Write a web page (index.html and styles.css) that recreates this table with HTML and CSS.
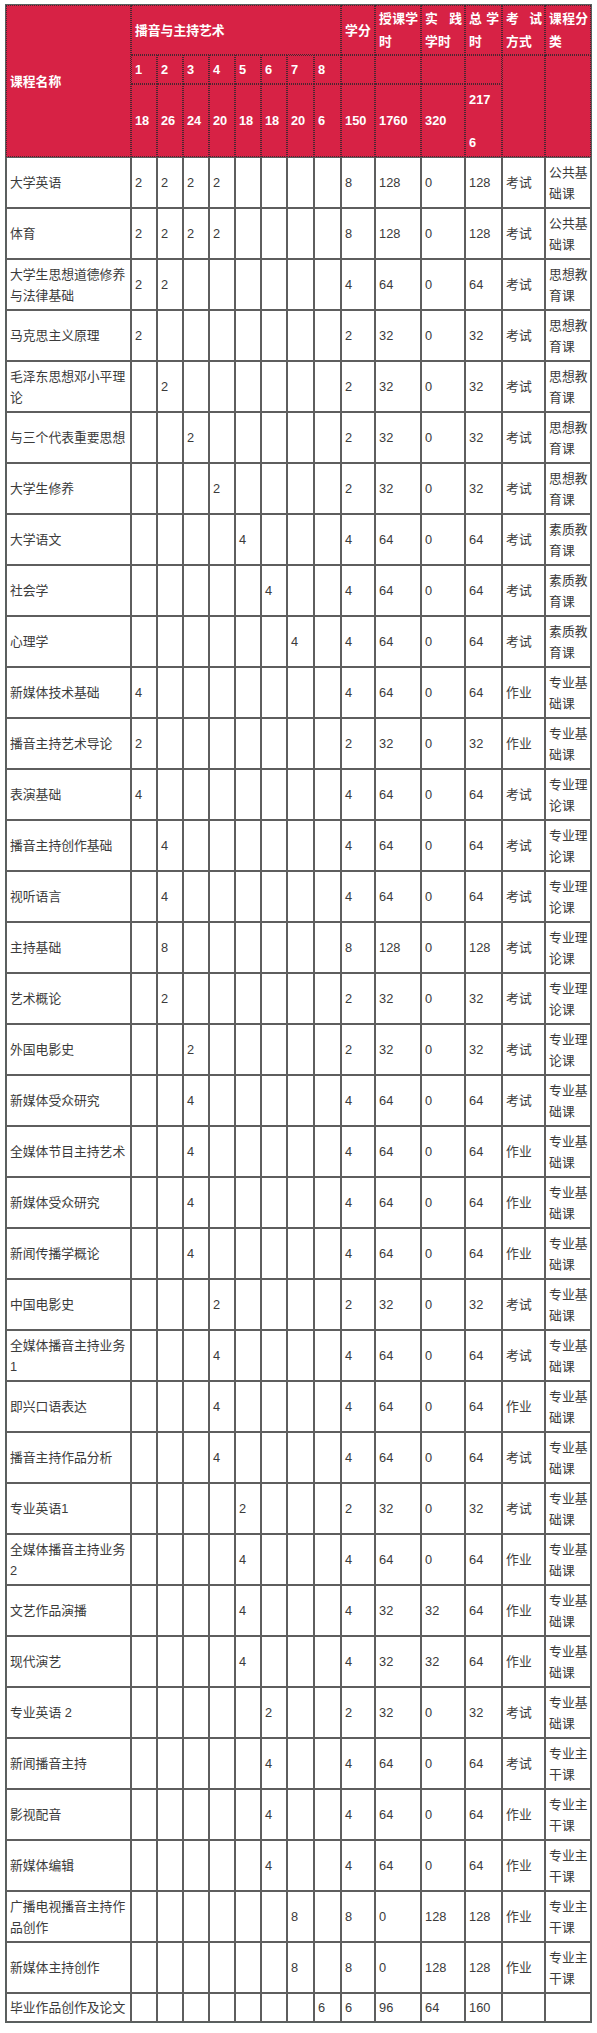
FILE: index.html
```html
<!DOCTYPE html>
<html lang="zh-CN">
<head>
<meta charset="utf-8">
<title>播音与主持艺术 课程设置</title>
<link rel="stylesheet" href="styles.css">
</head>
<body>
<table class="plan">
<colgroup>
<col class="c-name"><col class="c-sem" span="6"><col class="c-sem2" span="2"><col class="c-credit"><col class="c-teach"><col class="c-prac"><col class="c-total"><col class="c-exam"><col class="c-type">
</colgroup>
<thead>
<tr class="h1">
<th rowspan="3">课程名称</th>
<th colspan="8">播音与主持艺术</th>
<th>学分</th><th>授课学时</th><th>实践学时</th><th>总学时</th><th rowspan="1">考试方式</th><th>课程分类</th>
</tr>
<tr class="h2">
<th>1</th><th>2</th><th>3</th><th>4</th><th>5</th><th>6</th><th>7</th><th>8</th>
<th></th><th></th><th></th><th></th><th rowspan="2"></th><th rowspan="2"></th>
</tr>
<tr class="h3">
<th>18</th><th>26</th><th>24</th><th>20</th><th>18</th><th>18</th><th>20</th><th>6</th>
<th>150</th><th>1760</th><th>320</th><th class="split"><span>217</span><span>6</span></th>
</tr>
</thead>
<tbody>
<tr><td>大学英语</td><td>2</td><td>2</td><td>2</td><td>2</td><td></td><td></td><td></td><td></td><td>8</td><td>128</td><td>0</td><td>128</td><td>考试</td><td>公共基础课</td></tr>
<tr><td>体育</td><td>2</td><td>2</td><td>2</td><td>2</td><td></td><td></td><td></td><td></td><td>8</td><td>128</td><td>0</td><td>128</td><td>考试</td><td>公共基础课</td></tr>
<tr><td>大学生思想道德修养与法律基础</td><td>2</td><td>2</td><td></td><td></td><td></td><td></td><td></td><td></td><td>4</td><td>64</td><td>0</td><td>64</td><td>考试</td><td>思想教育课</td></tr>
<tr><td>马克思主义原理</td><td>2</td><td></td><td></td><td></td><td></td><td></td><td></td><td></td><td>2</td><td>32</td><td>0</td><td>32</td><td>考试</td><td>思想教育课</td></tr>
<tr><td>毛泽东思想邓小平理论</td><td></td><td>2</td><td></td><td></td><td></td><td></td><td></td><td></td><td>2</td><td>32</td><td>0</td><td>32</td><td>考试</td><td>思想教育课</td></tr>
<tr><td>与三个代表重要思想</td><td></td><td></td><td>2</td><td></td><td></td><td></td><td></td><td></td><td>2</td><td>32</td><td>0</td><td>32</td><td>考试</td><td>思想教育课</td></tr>
<tr><td>大学生修养</td><td></td><td></td><td></td><td>2</td><td></td><td></td><td></td><td></td><td>2</td><td>32</td><td>0</td><td>32</td><td>考试</td><td>思想教育课</td></tr>
<tr><td>大学语文</td><td></td><td></td><td></td><td></td><td>4</td><td></td><td></td><td></td><td>4</td><td>64</td><td>0</td><td>64</td><td>考试</td><td>素质教育课</td></tr>
<tr><td>社会学</td><td></td><td></td><td></td><td></td><td></td><td>4</td><td></td><td></td><td>4</td><td>64</td><td>0</td><td>64</td><td>考试</td><td>素质教育课</td></tr>
<tr><td>心理学</td><td></td><td></td><td></td><td></td><td></td><td></td><td>4</td><td></td><td>4</td><td>64</td><td>0</td><td>64</td><td>考试</td><td>素质教育课</td></tr>
<tr><td>新媒体技术基础</td><td>4</td><td></td><td></td><td></td><td></td><td></td><td></td><td></td><td>4</td><td>64</td><td>0</td><td>64</td><td>作业</td><td>专业基础课</td></tr>
<tr><td>播音主持艺术导论</td><td>2</td><td></td><td></td><td></td><td></td><td></td><td></td><td></td><td>2</td><td>32</td><td>0</td><td>32</td><td>作业</td><td>专业基础课</td></tr>
<tr><td>表演基础</td><td>4</td><td></td><td></td><td></td><td></td><td></td><td></td><td></td><td>4</td><td>64</td><td>0</td><td>64</td><td>考试</td><td>专业理论课</td></tr>
<tr><td>播音主持创作基础</td><td></td><td>4</td><td></td><td></td><td></td><td></td><td></td><td></td><td>4</td><td>64</td><td>0</td><td>64</td><td>考试</td><td>专业理论课</td></tr>
<tr><td>视听语言</td><td></td><td>4</td><td></td><td></td><td></td><td></td><td></td><td></td><td>4</td><td>64</td><td>0</td><td>64</td><td>考试</td><td>专业理论课</td></tr>
<tr><td>主持基础</td><td></td><td>8</td><td></td><td></td><td></td><td></td><td></td><td></td><td>8</td><td>128</td><td>0</td><td>128</td><td>考试</td><td>专业理论课</td></tr>
<tr><td>艺术概论</td><td></td><td>2</td><td></td><td></td><td></td><td></td><td></td><td></td><td>2</td><td>32</td><td>0</td><td>32</td><td>考试</td><td>专业理论课</td></tr>
<tr><td>外国电影史</td><td></td><td></td><td>2</td><td></td><td></td><td></td><td></td><td></td><td>2</td><td>32</td><td>0</td><td>32</td><td>考试</td><td>专业理论课</td></tr>
<tr><td>新媒体受众研究</td><td></td><td></td><td>4</td><td></td><td></td><td></td><td></td><td></td><td>4</td><td>64</td><td>0</td><td>64</td><td>考试</td><td>专业基础课</td></tr>
<tr><td>全媒体节目主持艺术</td><td></td><td></td><td>4</td><td></td><td></td><td></td><td></td><td></td><td>4</td><td>64</td><td>0</td><td>64</td><td>作业</td><td>专业基础课</td></tr>
<tr><td>新媒体受众研究</td><td></td><td></td><td>4</td><td></td><td></td><td></td><td></td><td></td><td>4</td><td>64</td><td>0</td><td>64</td><td>作业</td><td>专业基础课</td></tr>
<tr><td>新闻传播学概论</td><td></td><td></td><td>4</td><td></td><td></td><td></td><td></td><td></td><td>4</td><td>64</td><td>0</td><td>64</td><td>作业</td><td>专业基础课</td></tr>
<tr><td>中国电影史</td><td></td><td></td><td></td><td>2</td><td></td><td></td><td></td><td></td><td>2</td><td>32</td><td>0</td><td>32</td><td>考试</td><td>专业基础课</td></tr>
<tr><td>全媒体播音主持业务1</td><td></td><td></td><td></td><td>4</td><td></td><td></td><td></td><td></td><td>4</td><td>64</td><td>0</td><td>64</td><td>考试</td><td>专业基础课</td></tr>
<tr><td>即兴口语表达</td><td></td><td></td><td></td><td>4</td><td></td><td></td><td></td><td></td><td>4</td><td>64</td><td>0</td><td>64</td><td>作业</td><td>专业基础课</td></tr>
<tr><td>播音主持作品分析</td><td></td><td></td><td></td><td>4</td><td></td><td></td><td></td><td></td><td>4</td><td>64</td><td>0</td><td>64</td><td>考试</td><td>专业基础课</td></tr>
<tr><td>专业英语1</td><td></td><td></td><td></td><td></td><td>2</td><td></td><td></td><td></td><td>2</td><td>32</td><td>0</td><td>32</td><td>考试</td><td>专业基础课</td></tr>
<tr><td>全媒体播音主持业务2</td><td></td><td></td><td></td><td></td><td>4</td><td></td><td></td><td></td><td>4</td><td>64</td><td>0</td><td>64</td><td>作业</td><td>专业基础课</td></tr>
<tr><td>文艺作品演播</td><td></td><td></td><td></td><td></td><td>4</td><td></td><td></td><td></td><td>4</td><td>32</td><td>32</td><td>64</td><td>作业</td><td>专业基础课</td></tr>
<tr><td>现代演艺</td><td></td><td></td><td></td><td></td><td>4</td><td></td><td></td><td></td><td>4</td><td>32</td><td>32</td><td>64</td><td>作业</td><td>专业基础课</td></tr>
<tr><td>专业英语 2</td><td></td><td></td><td></td><td></td><td></td><td>2</td><td></td><td></td><td>2</td><td>32</td><td>0</td><td>32</td><td>考试</td><td>专业基础课</td></tr>
<tr><td>新闻播音主持</td><td></td><td></td><td></td><td></td><td></td><td>4</td><td></td><td></td><td>4</td><td>64</td><td>0</td><td>64</td><td>考试</td><td>专业主干课</td></tr>
<tr><td>影视配音</td><td></td><td></td><td></td><td></td><td></td><td>4</td><td></td><td></td><td>4</td><td>64</td><td>0</td><td>64</td><td>作业</td><td>专业主干课</td></tr>
<tr><td>新媒体编辑</td><td></td><td></td><td></td><td></td><td></td><td>4</td><td></td><td></td><td>4</td><td>64</td><td>0</td><td>64</td><td>作业</td><td>专业主干课</td></tr>
<tr><td>广播电视播音主持作品创作</td><td></td><td></td><td></td><td></td><td></td><td></td><td>8</td><td></td><td>8</td><td>0</td><td>128</td><td>128</td><td>作业</td><td>专业主干课</td></tr>
<tr><td>新媒体主持创作</td><td></td><td></td><td></td><td></td><td></td><td></td><td>8</td><td></td><td>8</td><td>0</td><td>128</td><td>128</td><td>作业</td><td>专业主干课</td></tr>
<tr class="last"><td>毕业作品创作及论文</td><td></td><td></td><td></td><td></td><td></td><td></td><td></td><td>6</td><td>6</td><td>96</td><td>64</td><td>160</td><td></td><td></td></tr>
</tbody>
</table>
</body>
</html>
```

FILE: styles.css
```css
html, body {
  margin: 0;
  padding: 0;
  background: #ffffff;
}

body {
  padding: 4px 0 10px 5px;
  font-family: "Liberation Sans", "Noto Sans CJK SC", sans-serif;
  font-size: 12.8px;
  color: #3b3b3b;
}

.plan {
  border-collapse: separate;
  border-spacing: 0;
  table-layout: fixed;
  width: 587px;
  border: 1px solid #58605f;
}

.c-name { width: 125px; }
.c-sem { width: 26px; }
.c-sem2 { width: 27px; }
.c-credit { width: 34px; }
.c-teach { width: 46px; }
.c-prac { width: 44px; }
.c-total { width: 37px; }
.c-exam { width: 43px; }
.c-type { width: 46px; }

.plan th,
.plan td {
  padding: 0 2px 0 3px;
  vertical-align: middle;
  text-align: left;
  line-height: 21px;
  overflow: hidden;
}

.plan td {
  border: 1px solid #5e5e5e;
}

.plan th {
  background: #d72245;
  color: #ffffff;
  font-weight: bold;
  border: 1px dotted #4a2630;
  text-align: justify;
}

.h1 { height: 50px; }
.h1 th { line-height: 23px; }
.h2 { height: 29px; }
.h3 { height: 73px; }

.split span {
  display: block;
}

.split span + span {
  margin-top: 22px;
}

.plan tbody tr { height: 51px; }
.plan tbody tr.last { height: 29px; }
```
